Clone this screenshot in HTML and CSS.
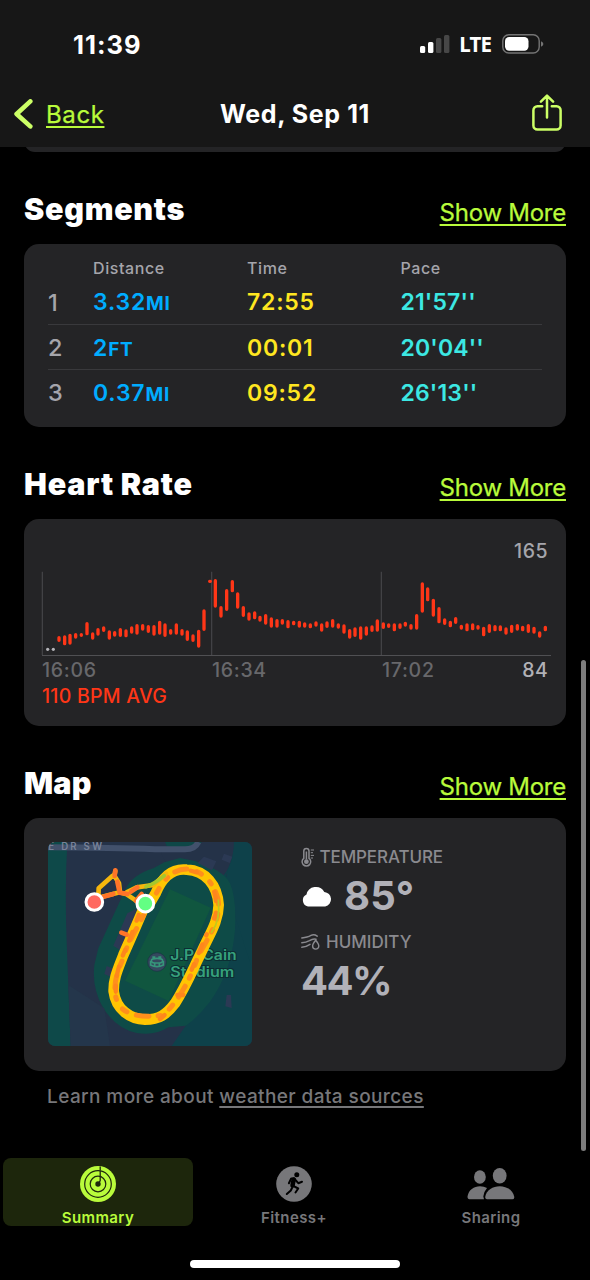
FILE: index.html
```html
<!DOCTYPE html>
<html lang="en">
<head>
<meta charset="utf-8">
<title>Wed, Sep 11</title>
<link rel="stylesheet" href="styles.css">
</head>
<body>
<div class="phone">
  <header class="topbar">
    <div class="status">
      <span class="clock">11:39</span>
      <div class="indicators">
        <svg class="signal" width="30" height="20" viewBox="0 0 30 20"><rect x="0" y="12" width="5.2" height="7" rx="1.5" fill="#fff"/><rect x="8" y="8" width="5.4" height="11" rx="1.5" fill="#fff"/><rect x="16" y="4" width="5.4" height="15" rx="1.5" fill="#474747"/><rect x="24" y="1" width="5.4" height="18" rx="1.5" fill="#474747"/></svg>
        <span class="lte">LTE</span>
        <svg class="battery" width="42" height="20" viewBox="0 0 42 20"><rect x=".8" y=".8" width="36.4" height="18.2" rx="6" fill="none" stroke="#747474" stroke-width="1.4"/><rect x="3" y="3" width="23.5" height="13.8" rx="4.2" fill="#fff"/><path d="M39 7.2q2.4 1 2.4 2.7t-2.4 2.8z" fill="#747474"/></svg>
      </div>
    </div>
    <nav class="nav">
      <a class="back"><svg width="19" height="30" viewBox="0 0 19 30"><path d="M16.3 2.4 2.6 15l13.7 12.4" fill="none" stroke="#ccff66" stroke-width="4.6" stroke-linecap="round" stroke-linejoin="round"/></svg><span class="link">Back</span></a>
      <h1 class="title">Wed, Sep 11</h1>
      <svg class="share" width="30" height="38" viewBox="0 0 30 38"><path d="M10.2 12.3H5.4A4 4 0 0 0 1.4 16.3V31.5A4 4 0 0 0 5.4 35.5H24.6A4 4 0 0 0 28.6 31.5V16.3A4 4 0 0 0 24.6 12.3H19.8M15 23.5V1.8M8.9 7.6 15 1.6l6.1 6" fill="none" stroke="#ccff66" stroke-width="2.5" stroke-linecap="round" stroke-linejoin="round"/></svg>
    </nav>
  </header>

  <main class="content">
    <div class="card-tail"></div>

    <section>
      <div class="section-head"><h2 class="h-seg">Segments</h2><a class="link">Show More</a></div>
      <div class="card segments">
        <div class="row head"><span></span><span>Distance</span><span>Time</span><span>Pace</span></div>
        <div class="row"><span class="idx">1</span><span class="dist">3.32<small>MI</small></span><span class="time">72:55</span><span class="pace">21'57''</span></div>
        <div class="row line"><span class="idx">2</span><span class="dist">2<small>FT</small></span><span class="time">00:01</span><span class="pace">20'04''</span></div>
        <div class="row line"><span class="idx">3</span><span class="dist">0.37<small>MI</small></span><span class="time">09:52</span><span class="pace">26'13''</span></div>
      </div>
    </section>

    <section>
      <div class="section-head"><h2 class="h-heart">Heart Rate</h2><a class="link">Show More</a></div>
      <div class="card heart">
        <div class="max">165</div>
        <svg class="chart" width="512" height="87" viewBox="30 30 1536 261">
          <path d="M37 35V285M545 35V285M1054 35V285" stroke="#454548" stroke-width="3.5" fill="none"/>
          <path d="M36 286.500H1563" stroke="#505053" stroke-width="3" fill="none"/>
          <circle cx="53" cy="268" r="4.800" fill="#b5b5ba"/><circle cx="70" cy="268" r="4.800" fill="#b5b5ba"/>
          <g fill="none" stroke="#ff3617" stroke-width="10" stroke-linecap="round">
            <path d="M87 233V241M104 231V251M120 226V249M137 224V231M154 224V226M171 191V221M188 222V234M204 209V222M221 204V211M238 216V234M254 218V225M271 209V226M288 213V227M305 204V216M321 197V219M338 197V207M355 200V214M372 200V222M389 187V219M405 195V226M422 212V219M439 195V219M456 212V222M472 216V238M489 228V241M506 214V258M522 153V208"/>
            <path transform="translate(510 0)" d="M29 64H31M46 62V138M63 143V168M80 92V148M97 65V92M113 102V141M130 143V166M147 162V177M164 159V173M180 172V180M197 167V189M214 177V198M231 182V198M247 182V189M264 185V200M281 187V191M298 187V198M314 192V198M331 195V200M348 189V195M365 195V210M381 189V199M398 182V198M415 195V201M432 198V216M449 212V231M465 207V226M482 204V234M499 204V222M516 201V211M532 183V210"/>
            <path transform="translate(1035 -90)" d="M25 282V292M41 285V289M58 285V299M75 285V292M91 280V285M108 287V294M125 257V294M142 162V243M158 177V209M175 211V255M192 236V275M209 270V280M226 277V287M242 266V277M259 289V294M276 285V299M293 285V296M309 290V294M326 295V314M343 287V304M360 290V299M376 291V299M393 297V309M410 289V304M427 287V297M443 292V299M460 287V304M477 295V306M494 309V318M511 292V299"/>
          </g>
        </svg>
        <div class="axis"><span>16:06</span><span>16:34</span><span>17:02</span><b>84</b></div>
        <div class="avg">110 BPM AVG</div>
      </div>
    </section>

    <section>
      <div class="section-head"><h2 class="h-map">Map</h2><a class="link">Show More</a></div>
      <div class="card map-card">
        <svg class="map" width="204" height="204" viewBox="24 21 612 612">
          <rect x="24" y="21" width="612" height="612" fill="#243248"/>
          <path d="M24 21H82Q74 160 80 320T92 633H24z" fill="#0e4949"/>
          <path d="M375 21H582Q585 85 558 120L636 300V633H395L435 575 520 480 560 300 550 140 500 80z" fill="#0e414a"/>
          <path d="M375 21H490L470 46 380 34z" fill="#0e4747"/>
          <path d="M582 21H636V400L565 180Q550 110 575 80z" fill="#0e414a"/>
          <path d="M485 21H582Q580 90 545 128L500 110 420 75 375 80 360 45H440Q470 43 485 21z" fill="#243248"/>
          <path d="M373 82 420 69 465 78Q550 105 570 145 590 190 585 285 575 410 510 500 470 550 438 572L385 577Q345 603 290 594 230 582 190 520 155 460 163 390L175 340 255 165Q275 120 340 100z" fill="#0e4b47"/>
          <path d="M193 520 210 633H92L85 450z" fill="#24364b"/>
          <path d="M390 163 512 218 386 498 255 437z" fill="#10563f"/>
          <path d="M262 235 292 220 275 285 240 345 220 332zM200 393 222 402 213 426 193 417zM473 84 492 65 529 79 516 106zM552 56 577 65 569 84 545 74zM560 480H573L575 519 556 514z" fill="#2b3954"/>
          <path d="M24 37Q220 38 345 43H435Q465 43 475 21" fill="none" stroke="#42516b" stroke-width="18"/>
          <text x="25" y="44" class="street" textLength="161">E DR SW</text>
          <circle cx="351" cy="381" r="28" fill="#34485e" stroke="#1b2f45" stroke-width="2"/>
          <g fill="none" stroke="#36957a" stroke-width="5"><ellipse cx="351" cy="377" rx="17" ry="7"/><path d="M332 378V390Q351 400 370 390V378M344 384V394M358 384V394"/></g><path d="M337 364h9v5h-9zM355 364h9v5h-9z" fill="#36957a"/>
          <g class="place"><text x="391" y="374" textLength="199" lengthAdjust="spacingAndGlyphs">J.P. Cain</text><text x="391" y="425" textLength="192" lengthAdjust="spacingAndGlyphs">Stadium</text></g>
          <g fill="none" stroke-linecap="round" stroke-linejoin="round">
            <path d="M316 208C290 270 270 315 250 360 235 400 220 430 221 469 228 525 272 552 315 554 358 554 380 538 405 505 440 450 455 410 485 350 510 295 535 260 536 210 532 150 497 107 440 104 393 99 365 130 347 175L325 212" stroke="#ffc502" stroke-width="32"/>
            <path d="M311 240C292 280 262 322 248 374 224 424 213 480 242 517 275 549 330 546 372 540 415 495 449 440 473 366 514 291 543 252 534 192 520 142 491 112 450 103 394 96 364 145 343 186" stroke="#ff8f1c" stroke-width="15" stroke-dasharray="16 30 38 27 8 34"/>
            <path d="M296 240 262 332Q222 410 228 480M360 552 385 530M412 480H432M455 404 500 298M522 250Q540 220 515 145M470 112 420 98" stroke="#ff861c" stroke-width="13" stroke-dasharray="18 36 28 30"/>
            <path d="M175 188 239 172 260 178 305 208M175 188 176 160 217 123M226 108 223 122 237 145 240 172M260 172 290 157 340 150 378 116" stroke="#f6b60d" stroke-width="14"/>
            <path d="M226 106 224 123M232 140 239 173 262 177M185 187 220 177M273 170 292 157M305 177 288 198M244 293 260 299" stroke="#ff7429" stroke-width="14"/>
            <path d="M318 155Q345 146 373 122" stroke="#a7c72b" stroke-width="11"/>
            <path d="M515 292Q542 255 535 195" stroke="#c3c81c" stroke-width="5"/>
          </g>
          <circle cx="163" cy="201" r="25" fill="#ff6960" stroke="#fff" stroke-width="9"/>
          <circle cx="316" cy="206" r="25" fill="#63ff83" stroke="#fff" stroke-width="9"/>
        </svg>
        <div class="weather">
          <div class="label temp"><svg width="14" height="21" viewBox="0 0 14 21"><path d="M2.8 11.3V4a2.6 2.6 0 0 1 5.200 0v7.300a4.300 4.300 0 1 1-5.200 0z" fill="none" stroke="#8a8a8f" stroke-width="1.500"/><path d="M5.400 4.500v8" stroke="#8a8a8f" stroke-width="1.500"/><circle cx="5.400" cy="14.700" r="2.400" fill="#8a8a8f"/><path d="M9.800 3H13M9.800 5.700H12M9.800 8.400H13M9.800 11H12" stroke="#8a8a8f" stroke-width="1"/></svg><span>TEMPERATURE</span></div>
          <div class="value degrees"><svg width="32" height="22" viewBox="0 0 32 22"><path d="M7 21.500A6.300 6.300 0 0 1 5.500 9.600 9.600 9.600 0 0 1 23.300 6.900 7.400 7.400 0 0 1 24.200 21.500z" fill="#fff"/></svg><span>85°</span></div>
          <div class="label humid"><svg width="19" height="16" viewBox="0 0 19 16"><path d="M.8 4Q3.800 3.500 6 3T10 1.400Q13 0 16.200 2.200M.8 8.800Q5 8.500 8.500 6.600 12 4.300 15 5.200M.8 13.200Q5 13 9 10.300" fill="none" stroke="#8a8a8f" stroke-width="1.500" stroke-linecap="round"/><path d="M14.700 6.300Q11.600 10 11.600 12a3.100 3.100 0 0 0 6.200 0Q17.800 10 14.700 6.300z" fill="#242426" stroke="#8a8a8f" stroke-width="1.400"/></svg><span>HUMIDITY</span></div>
          <div class="value percent">44%</div>
        </div>
      </div>
      <p class="sources">Learn more about <a>weather data sources</a></p>
    </section>
  </main>

  <footer class="tabs">
    <div class="tab active">
      <svg width="36" height="36" viewBox="0 0 36 36"><circle cx="18" cy="18" r="18" fill="#b9fb3b"/><g fill="none" stroke="#1d260c" stroke-width="1.200"><circle cx="18" cy="18" r="13.300"/><circle cx="18" cy="18" r="7.800"/></g><circle cx="18" cy="18" r="2.700" fill="#1d260c"/><path d="M20.200 .5V4.500M20.200 5V10M20.200 11V14.500L18.500 18" fill="none" stroke="#1d260c" stroke-width="1.300"/></svg>
      <span>Summary</span>
    </div>
    <div class="tab">
      <svg width="36" height="36" viewBox="0 0 36 36"><circle cx="18" cy="18" r="17.800" fill="#77777a"/><circle cx="20.800" cy="8.800" r="2.500" fill="#000"/><g fill="none" stroke="#000" stroke-linecap="round" stroke-linejoin="round"><path d="M17.700 13.500 16.500 19.500" stroke-width="4.500"/><path d="M18.500 12.500H15.200L12.900 17.300M19 13.500 22.300 17.200 26 15.700M17.200 19.800 22.200 22.500 19.500 26.500M16 22 14.800 24.500 10.800 28" stroke-width="2"/></g></svg>
      <span>Fitness+</span>
    </div>
    <div class="tab sharing">
      <svg width="48" height="36" viewBox="0 0 48 36"><g fill="#77777a"><ellipse cx="12.900" cy="11" rx="5.900" ry="6.700"/><ellipse cx="32.700" cy="9.800" rx="6.900" ry="7.800"/><path d="M2.500 33.300Q.5 33.300.5 30.500C1.500 24 7 20.300 13 20.300Q17 20.300 20 22 16.600 26 16.300 30.500L17 33.300z"/><path d="M20 33.300Q18 33.300 18.300 30.500C19.300 24 26 20.200 32.700 20.200S46 24 47.200 30.500Q47.500 33.300 45.300 33.300z"/></g></svg>
      <span>Sharing</span>
    </div>
  </footer>
  <div class="home"></div>
  <div class="scrollbar"></div>
</div>
</body>
</html>
```

FILE: styles.css
```css
* { box-sizing: border-box; margin: 0; padding: 0; }
body { background: #000; font-family: Inter, "Liberation Sans", sans-serif; color: #fff; }
svg { display: block; flex: none; }
.phone { position: relative; width: 590px; height: 1280px; overflow: hidden; background: #000; display: flex; flex-direction: column; }
.topbar { height: 147px; background: #171717; flex: none; padding-top: 24px; z-index: 1; }
.status { height: 40px; padding: 0 46px 0 73px; display: flex; align-items: center; justify-content: space-between; }
.clock { font-size: 25.5px; font-weight: 700; letter-spacing: 1px; }
.indicators { display: flex; align-items: center; }
.lte { font: 700 20.5px/24px "Noto Sans", Inter, sans-serif; margin: 0 11px 0 10px; letter-spacing: -.9px; }
.signal { margin-right: -1px; }
.nav { height: 60px; margin-top: 20px; padding: 0 28px 0 14px; display: grid; grid-template-columns: 1fr auto 1fr; align-items: center; }
.back { display: flex; align-items: center; gap: 13px; }
.back .link { padding-top: 1px; letter-spacing: .6px; }
.title { font-size: 25px; font-weight: 700; letter-spacing: .6px; padding-left: 14px; }
.share { justify-self: end; margin-top: -2px; }
.link { color: #b9fb3b; font-size: 24px; line-height: 30px; letter-spacing: -.25px; text-decoration: underline; text-decoration-thickness: 2px; text-underline-offset: 3px; -webkit-text-stroke: .25px #b9fb3b; }
.section-head .link { padding-right: 1px; margin-right: -1px; position: relative; top: 1px; }
.content { flex: none; height: 1003px; padding: 0 24px; }
.card-tail { height: 22px; margin-top: -17px; background: #242426; border-radius: 15px; }
.section-head { height: 92px; padding-top: 39px; display: flex; align-items: baseline; justify-content: space-between; }
h2 { font-size: 30.5px; line-height: 36px; font-weight: 900; }
.h-seg { letter-spacing: .7px; }
.h-heart { letter-spacing: .8px; }
.h-map { letter-spacing: .2px; }
.card { background: #242426; border-radius: 15px; }
.segments { height: 183px; padding: 13px 24px; }
.row { display: grid; grid-template-columns: 45px 154px 153.500px 1fr; height: 45px; padding-top: 1px; align-items: center; font-size: 23px; font-weight: 600; }
.row.head { height: 22px; padding-top: 0; font-size: 16px; font-weight: 500; color: #a5a5ab; letter-spacing: .6px; }
.row.line { border-top: 1px solid #39393c; }
.idx { color: #a5a5ab; font-weight: 500; font-size: 23.5px; }
.dist { color: #00acff; letter-spacing: .8px; }
.dist small { font-size: 19px; font-weight: 700; }
.time { color: #ffe620; letter-spacing: .8px; }
.pace { color: #3ce8e3; letter-spacing: .15px; }
.heart { height: 207px; padding: 20px 14px 0 16px; }
.max { text-align: right; padding-right: 4px; font-size: 19.5px; line-height: 24px; font-weight: 500; letter-spacing: .5px; color: #a5a5ab; margin-bottom: 7px; }
.chart { width: 512px; height: 87px; }
.axis { display: grid; grid-template-columns: 170px 170px 1fr auto; padding: 1px 4px 0 2px; font-size: 19.5px; line-height: 24px; font-weight: 500; letter-spacing: .7px; color: #68686b; }
.axis b { font-weight: 500; letter-spacing: .3px; color: #b1b1b6; }
.avg { padding: 2px 0 0 2px; font-size: 19.5px; line-height: 24px; font-weight: 500; letter-spacing: .25px; color: #ff3617; }
.map-card { height: 253px; padding: 24px; display: flex; gap: 49px; }
.map { border-radius: 7px; }
.street { font: 600 29px Inter, sans-serif; fill: #798399; }
.place { font: 600 42px/1 Inter, sans-serif; fill: #36a17c; stroke: #0c2e33; stroke-width: 6px; paint-order: stroke; }
.label { display: flex; align-items: center; font-size: 17px; font-weight: 500; color: #8a8a8f; line-height: 22px; }
.temp { padding-top: 4px; gap: 5px; letter-spacing: -.1px; margin-left: -.500px; }
.humid { margin-top: 12px; gap: 6px; }
.value { font-size: 40px; line-height: 50px; font-weight: 700; color: #b1b1b8; display: flex; align-items: center; }
.degrees { gap: 11px; padding-top: 3px; margin-bottom: -2px; letter-spacing: .2px; }
.percent { margin-top: 3px; letter-spacing: -1.500px; }
.sources { padding: 14px 23px; font-size: 19px; line-height: 24px; font-weight: 500; letter-spacing: .4px; color: #77777a; }
.sources a { text-decoration: underline; text-decoration-thickness: 1.500px; text-underline-offset: 3px; }
.tabs { display: grid; grid-template-columns: 190px 190px 190px; gap: 6px; padding: 8px 0 0 3px; }
.tab { height: 68px; padding-top: 8px; border-radius: 8px; display: flex; flex-direction: column; align-items: center; gap: 6px; font-size: 15px; line-height: 20px; font-weight: 600; color: #77777a; letter-spacing: .4px; }
.tab.active { background: #1d260c; color: #b9fb3b; }
.tab.sharing { padding-left: 2px; }
.home { width: 210px; height: 8px; border-radius: 4px; background: #fff; margin: 34px auto 0; }
.scrollbar { position: absolute; left: 581px; top: 660px; width: 5px; height: 491px; border-radius: 3px; background: #7d7d7d; }
```
